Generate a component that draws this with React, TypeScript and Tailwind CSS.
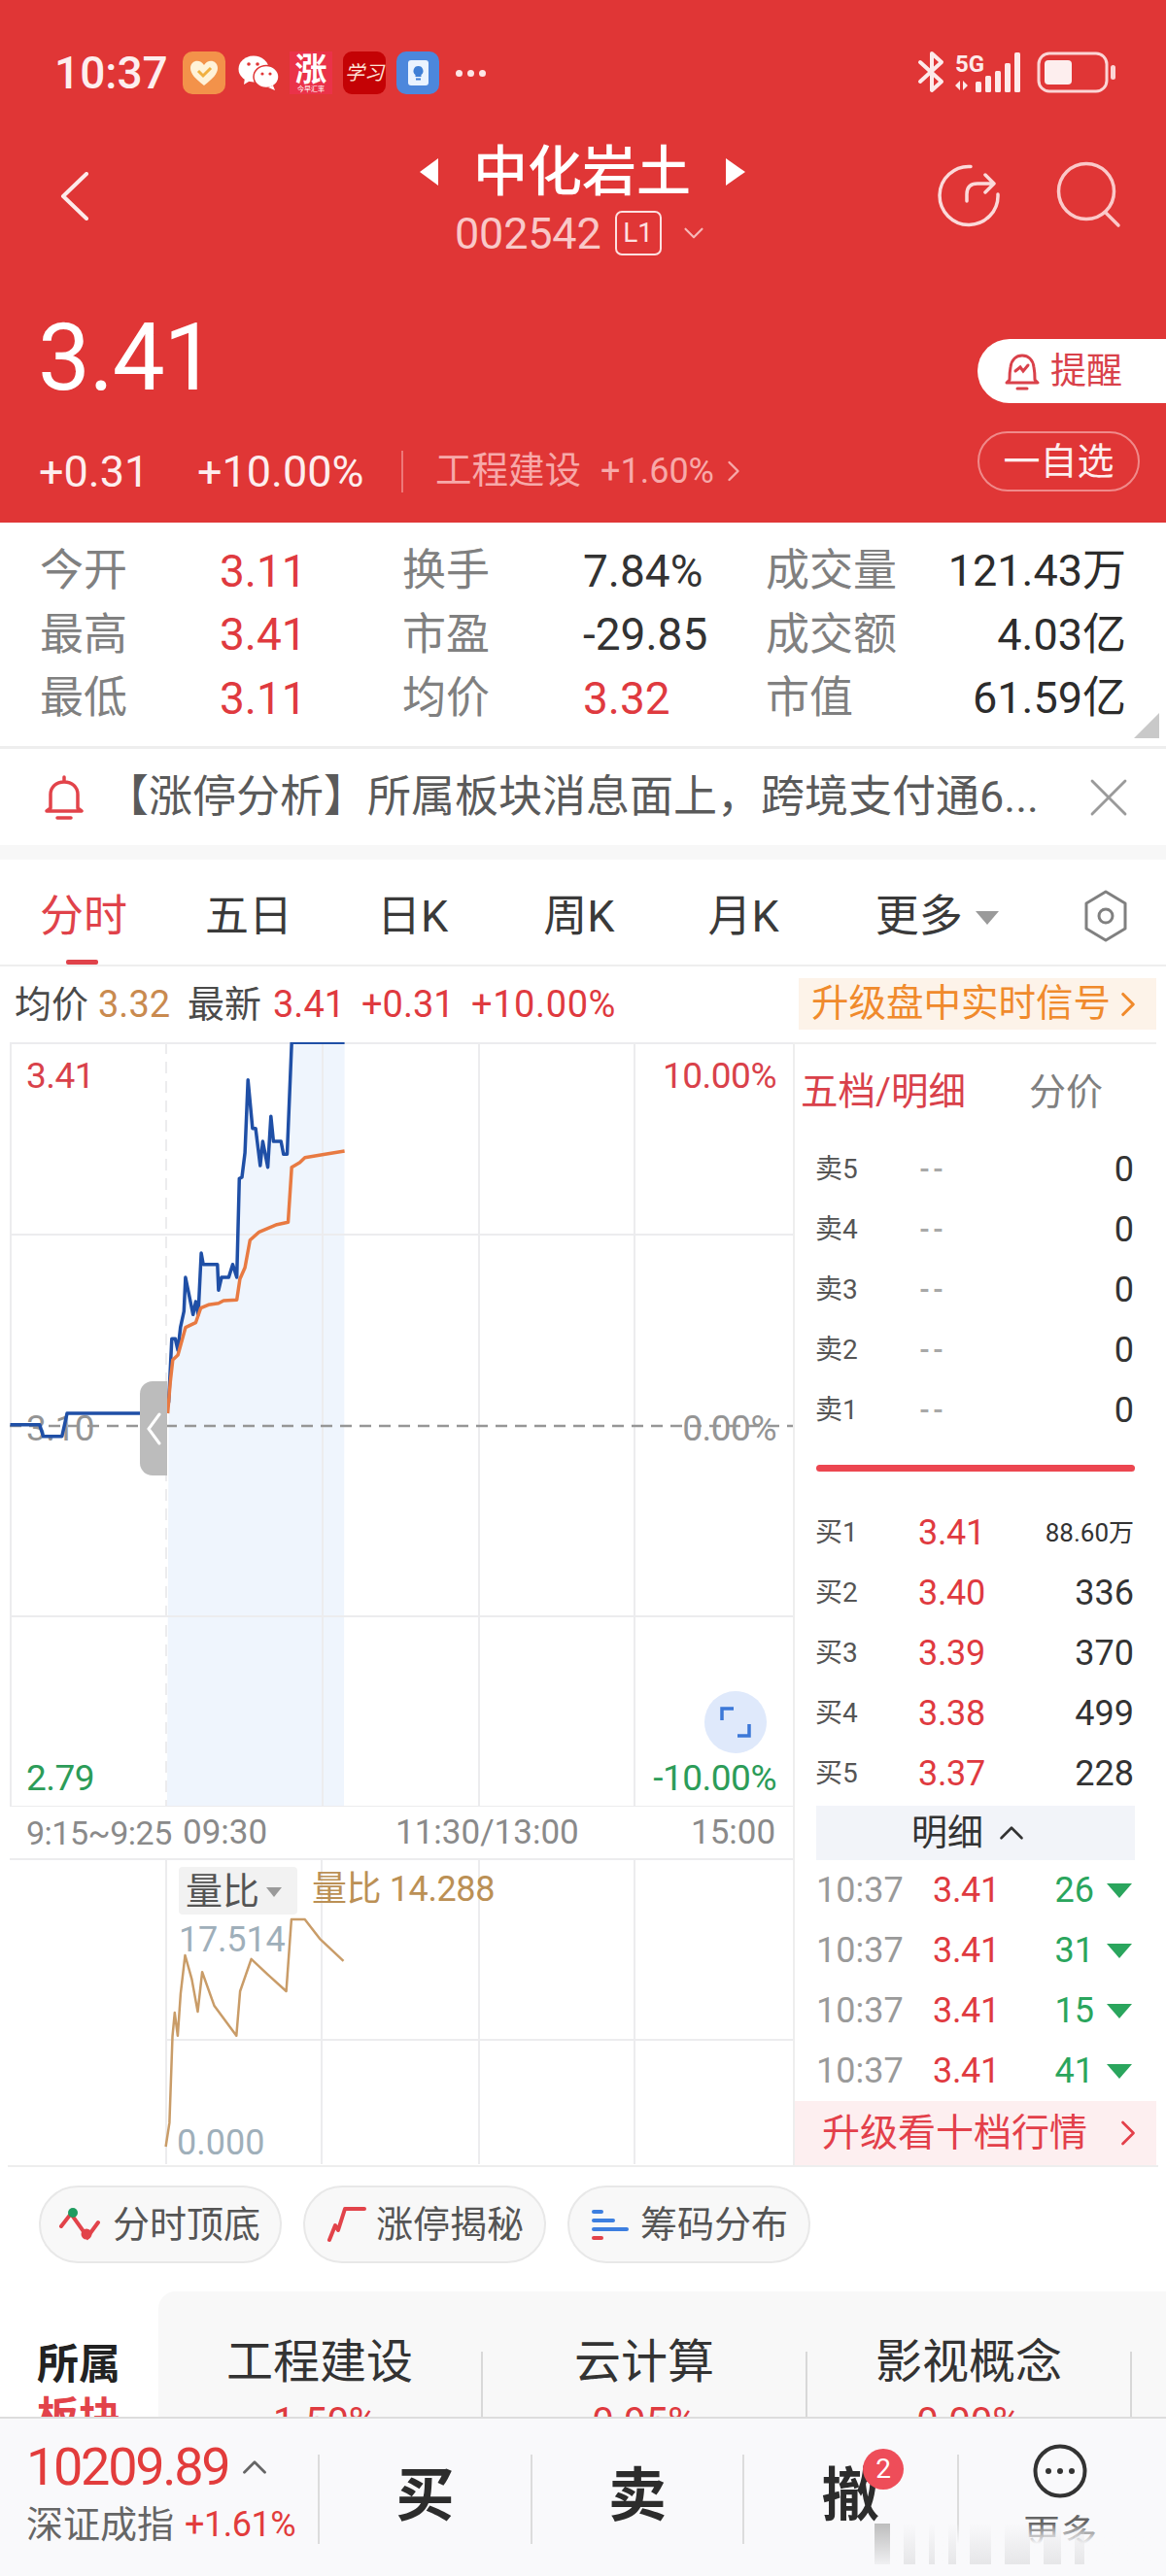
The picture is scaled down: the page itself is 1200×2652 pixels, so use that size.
import { ChevronRight, ChevronUp, ChevronDown, X } from 'lucide-react';

// zoom-crop coordinates -> page pixels for the two charts
const pts = (list: number[][], sx: number, sy: number, oy: number) =>
  list.map(([x, y]) => `${(x / sx).toFixed(1)},${(oy + y / sy).toFixed(1)}`).join(' ');

const BLUE = [[20,1220],[78,1220],[85,1256],[122,1256],[132,1185],[325,1185],[332,1150],[338,955],[345,955],[350,990],[355,920],[362,870],[365,765],[380,880],[385,840],[390,880],[396,690],[400,725],[428,725],[430,805],[436,765],[450,765],[458,725],[466,765],[471,460],[476,456],[482,380],[488,155],[497,305],[503,305],[512,420],[517,345],[527,425],[533,268],[538,345],[553,345],[558,385],[565,385],[574,40],[678,40]];
const BLUE_FILL = BLUE.slice(6);
const ORANGE = [[330,1185],[335,1090],[340,1020],[350,1005],[365,920],[385,905],[395,860],[410,850],[430,845],[440,837],[466,835],[472,770],[482,735],[492,650],[510,625],[545,602],[567,595],[574,425],[590,410],[600,395],[640,385],[678,375]];
const RATIO = [[223,670],[228,620],[232,440],[235,390],[239,438],[243,350],[249,270],[258,320],[266,388],[272,305],[288,375],[318,438],[323,345],[338,278],[360,310],[385,345],[392,195],[410,195],[430,235],[462,282]];

const STATS = [
  ['今开', '3.11', '换手', '7.84%', '成交量', '121.43万', false],
  ['最高', '3.41', '市盈', '-29.85', '成交额', '4.03亿', false],
  ['最低', '3.11', '均价', '3.32', '市值', '61.59亿', true],
] as const;

const SELLS = ['卖5', '卖4', '卖3', '卖2', '卖1'];
const BUYS = [
  ['买1', '3.41', '88.60万'],
  ['买2', '3.40', '336'],
  ['买3', '3.39', '370'],
  ['买4', '3.38', '499'],
  ['买5', '3.37', '228'],
];
const TICKS = ['26', '31', '15', '41'];

function StatusBar() {
  return (
    <div className="flex h-[152px] items-center justify-between pl-[56px] pr-[52px] pb-[2px] text-white">
      <div className="flex items-center">
        <span className="w-[132px] text-[46px] font-medium leading-none text-[#fdeeee]">10:37</span>
        <div className="flex h-[44px] w-[44px] items-center justify-center rounded-[10px] bg-[#f3924a]">
          <svg width="30" height="28" viewBox="0 0 30 28">
            <path d="M15 27C6 20 1 15 1 9c0-8 10-10 14-3 4-7 14-5 14 3 0 6-5 11-14 18z" fill="#fff2d8" />
            <path d="M9 12l5 5 8-8" fill="none" stroke="#f0b040" strokeWidth="3" />
          </svg>
        </div>
        <svg className="ml-[13px]" width="43" height="36" viewBox="0 0 43 36">
          <ellipse cx="16" cy="14" rx="15.500" ry="13.500" fill="#fff" />
          <path d="M7 23l-1 7 8-5z" fill="#fff" />
          <ellipse cx="29" cy="22" rx="13" ry="11.500" fill="#fff" stroke="#e03636" strokeWidth="1.500" />
          <path d="M36 31l2 5-7-3z" fill="#fff" />
          <circle cx="11" cy="9" r="1.800" fill="#e03636" />
          <circle cx="20" cy="9" r="1.800" fill="#e03636" />
          <circle cx="25" cy="19" r="1.600" fill="#e03636" />
          <circle cx="33" cy="19" r="1.600" fill="#e03636" />
        </svg>
        <div className="ml-[10px] flex h-[44px] w-[44px] flex-col items-center justify-center bg-[#ea3249] leading-none text-white">
          <span className="text-[33px] font-bold leading-[33px]">涨</span>
          <span className="text-[7px] leading-[8px]">今早汇率</span>
        </div>
        <div className="ml-[11px] flex h-[44px] w-[44px] items-center justify-center rounded-[9px] bg-[#c40205] font-['Liberation_Serif','Noto_Sans_CJK_SC',serif] text-[20px] italic leading-none text-[#fde2d6]">
          学习
        </div>
        <div className="ml-[11px] flex h-[44px] w-[44px] items-center justify-center rounded-[10px] bg-[#4c87dc]">
          <div className="flex h-[26px] w-[21px] items-center justify-center rounded-[3px] bg-[#eaf3ff]">
            <svg width="13" height="16" viewBox="0 0 13 16">
              <path d="M6.500 1a5 5 0 0 0-3 9v2h6v-2a5 5 0 0 0-3-9z" fill="#3f7fd6" />
              <rect x="4" y="13.500" width="5" height="2" fill="#3f7fd6" />
            </svg>
          </div>
        </div>
        <div className="ml-[17px] flex gap-[5px]">
          <span className="h-[7px] w-[7px] rounded-full bg-[#fde6e6]" />
          <span className="h-[7px] w-[7px] rounded-full bg-[#fde6e6]" />
          <span className="h-[7px] w-[7px] rounded-full bg-[#fde6e6]" />
        </div>
      </div>
      <svg width="204" height="44" viewBox="944 55 204 44" className="text-[#fdeaea]">
        <path d="M947 66l22 20-10 9V57l10 9-22 20" fill="none" stroke="currentColor" strokeWidth="4" strokeLinejoin="round" strokeLinecap="round" />
        <text x="983" y="76" fill="currentColor" fontSize="24" fontWeight="700" fontFamily="Roboto, sans-serif">5G</text>
        <path d="M988 85l-5 5 5 5zM991 85l5 5-5 5z" fill="currentColor" />
        <rect x="1004" y="86" width="6" height="11" rx="1.500" fill="currentColor" />
        <rect x="1014" y="80" width="6" height="17" rx="1.500" fill="currentColor" />
        <rect x="1024" y="75" width="6" height="22" rx="1.500" fill="currentColor" />
        <rect x="1034" y="67" width="6" height="30" rx="1.500" fill="currentColor" />
        <rect x="1044" y="56" width="6" height="41" rx="1.500" fill="currentColor" />
        <rect x="1069" y="57" width="70" height="39" rx="11" fill="none" stroke="#fbd5d5" strokeWidth="3" />
        <rect x="1075" y="64" width="28" height="25" rx="4" fill="#fdeeee" />
        <rect x="1143" y="69" width="5" height="15" rx="2.500" fill="#fbd5d5" />
      </svg>
    </div>
  );
}

function NavRow() {
  return (
    <div className="flex h-[122px]">
      <div className="w-[432px] pl-[62px] pt-[25px]">
        <svg width="30" height="50" viewBox="0 0 30 50" fill="none" stroke="#fdeaea" strokeWidth="4" strokeLinecap="round" strokeLinejoin="round">
          <path d="M27 2L3 25l24 23" />
        </svg>
      </div>
      <div className="w-[335px]">
        <div className="flex h-[50px] items-center justify-between">
          <span className="h-0 w-0 border-y-[14px] border-r-[19px] border-y-transparent border-r-white" />
          <span className="text-[56px] font-medium leading-none text-white">中化岩土</span>
          <span className="h-0 w-0 border-y-[14px] border-l-[20px] border-y-transparent border-l-white" />
        </div>
        <div className="mt-[15px] flex h-[46px] items-center pl-[36px]">
          <span className="text-[45px] leading-none tracking-[-0.2px] text-[#f9c8c8]">002542</span>
          <span className="ml-[14px] flex h-[46px] w-[48px] items-center justify-center rounded-[7px] border-2 border-[#fde0e0] text-[28px] leading-none text-[#fde0e0]">L1</span>
          <ChevronDown size={34} strokeWidth={1.5} className="ml-[16px] text-[#f7b8b8]" />
        </div>
      </div>
      <div className="flex flex-1 items-start pl-[195px] pt-[14px]">
        <svg width="70" height="70" viewBox="0 0 70 70" fill="none" stroke="#fbdada" strokeWidth="3.500" strokeLinecap="round" strokeLinejoin="round">
          <path d="M37 5.500A30 30 0 1 0 65 34" />
          <path d="M33 41v-7q0-11 11-11h16M52 14l9 9-9 9" />
        </svg>
        <svg className="ml-[54px] -mt-[1px]" width="72" height="72" viewBox="0 0 72 72" fill="none" stroke="#fbc9c9" strokeWidth="3.500" strokeLinecap="round">
          <circle cx="32" cy="32" r="28.500" />
          <path d="M52 54l13 13" />
        </svg>
      </div>
    </div>
  );
}

function PriceRow() {
  return (
    <div className="flex justify-between">
      <div>
        <div className="pl-[39px] pt-[44px] text-[96px] font-normal leading-[100px] tracking-[-1.200px] text-white">3.41</div>
        <div className="mt-[45px] flex h-[44px] items-center pl-[40px]">
          <span className="w-[163px] text-[45px] leading-none text-[#fdeeee]">+0.31</span>
          <span className="w-[210px] text-[45px] leading-none text-[#fdeeee]">+10.00%</span>
          <span className="h-[43px] w-[2px] bg-[#ee7878]" />
          <span className="ml-[33px] text-[37.500px] leading-none text-[#f7a9a9]">工程建设</span>
          <span className="ml-[20px] text-[36px] leading-none text-[#f7a9a9]">+1.60%</span>
          <ChevronRight size={36} strokeWidth={1.6} className="ml-[2px] text-[#f7a9a9]" />
        </div>
      </div>
      <div className="flex w-[194px] flex-col items-start pt-[75px]">
        <div className="flex h-[66px] w-[194px] items-center rounded-l-full bg-white pl-[28px]">
          <svg width="36" height="42" viewBox="0 0 36 42" fill="none" stroke="#d9414a" strokeWidth="3">
            <path d="M5 30c0-4 0-8 1-13C7 9 12 5 18 5s11 4 12 12c1 5 1 9 1 13l3 3H2z" strokeLinejoin="round" />
            <path d="M11 21l5-4 3 4 5-6M13 39h10" strokeLinecap="round" />
          </svg>
          <span className="ml-[11px] text-[37px] leading-none text-[#d9414a]">提醒</span>
        </div>
        <div className="mt-[29px] flex h-[62px] w-[167px] items-center justify-center rounded-full border-2 border-[#f08a8a] text-[38px] leading-none text-[#fdeeee]">
          一自选
        </div>
      </div>
    </div>
  );
}

function Stats() {
  return (
    <div className="relative h-[230px] bg-white pl-[41px] pr-[41px] pt-[17px]">
      {STATS.map((row) => (
        <div key={row[0]} className="grid h-[65.500px] grid-cols-[185px_188px_186px_188px_1fr] items-center text-[45px] leading-none">
          <span className="text-[#808080]">{row[0]}</span>
          <span className="text-[46px] text-[#df3a3f]">{row[1]}</span>
          <span className="text-[#808080]">{row[2]}</span>
          <span className={row[6] ? 'text-[46px] text-[#df3a3f]' : 'text-[46px] text-[#333]'}>{row[3]}</span>
          <div className="flex justify-between">
            <span className="text-[#808080]">{row[4]}</span>
            <span className="text-[#2c2c2c]">{row[5]}</span>
          </div>
        </div>
      ))}
      <span className="absolute bottom-[8px] right-[7px] h-0 w-0 border-b-[26px] border-l-[26px] border-b-[#c9c9c9] border-l-transparent" />
    </div>
  );
}

function Notice() {
  return (
    <div className="flex h-[102px] items-center border-t-[3px] border-[#eeeeee] bg-white pl-[46px]">
      <svg width="40" height="48" viewBox="0 0 40 48" fill="none" stroke="#e2434a" strokeWidth="3.500">
        <path d="M6 35V21C6 13 12 8 20 8s14 5 14 13v14l4 3H2zM20 8V3M13 45h14" strokeLinejoin="round" strokeLinecap="round" />
      </svg>
      <span className="ml-[22px] w-[958px] whitespace-nowrap text-[45px] leading-none text-[#5a5a5a]">【涨停分析】所属板块消息面上，跨境支付通6...</span>
      <X size={68} strokeWidth={1} className="ml-[41px] shrink-0 text-[#9a9a9a]" />
    </div>
  );
}

function Tabs() {
  return (
    <div className="relative flex h-[110px] items-center border-b-2 border-[#eeeeee] bg-white pt-[8px] text-[45px] leading-none text-[#3a3a3a]">
      <span className="ml-[41px] text-[#e0424a]">分时</span>
      <span className="ml-[80px]">五日</span>
      <span className="ml-[87px]">日K</span>
      <span className="ml-[98px]">周K</span>
      <span className="ml-[96px]">月K</span>
      <span className="ml-[99px]">更多</span>
      <span className="ml-[13px] mt-[3px] h-0 w-0 border-x-[12px] border-t-[14px] border-x-transparent border-t-[#9a9a9a]" />
      <svg className="ml-[86px]" width="48" height="54" viewBox="0 0 48 54" fill="none" stroke="#808080" strokeWidth="3">
        <path d="M24 2l20 12v26L24 52 4 40V14z" strokeLinejoin="round" />
        <circle cx="24" cy="27" r="7" />
      </svg>
      <span className="absolute bottom-[0px] left-[68px] h-[5px] w-[33px] rounded-[2px] bg-[#e0424a]" />
    </div>
  );
}

function InfoLine() {
  return (
    <div className="flex h-[65px] items-end justify-between bg-white pl-[15px] pr-[10px]">
      <div className="flex h-[53px] items-center text-[38px] leading-none">
        <span className="w-[86px] text-[#4a4a4a]">均价</span>
        <span className="w-[92px] text-[#c98a4f]">3.32</span>
        <span className="w-[88px] text-[#4a4a4a]">最新</span>
        <span className="w-[91px] text-[#df3a3f]">3.41</span>
        <span className="w-[113px] text-[#df3a3f]">+0.31</span>
        <span className="tracking-[0.6px] text-[#df3a3f]">+10.00%</span>
      </div>
      <div className="flex h-[53px] w-[368px] items-center bg-[#fdf3e9] pl-[13px] text-[38.500px] leading-none text-[#f08a2c]">
        升级盘中实时信号
        <ChevronRight size={42} strokeWidth={1.8} className="ml-[-3px]" />
      </div>
    </div>
  );
}

function PriceChart() {
  return (
    <div className="relative h-[787px]">
      <span className="absolute left-[17px] top-[16px] text-[37px] leading-[37px] tracking-[-0.5px] text-[#d9414a]">3.41</span>
      <span className="absolute right-[17px] top-[16px] text-[37px] leading-[37px] tracking-[-0.5px] text-[#d9414a]">10.00%</span>
      <span className="absolute left-[17px] top-[379px] text-[37px] leading-[37px] tracking-[-0.5px] text-[#949494]">3.10</span>
      <span className="absolute right-[17px] top-[379px] text-[37px] leading-[37px] tracking-[-0.5px] text-[#949494]">0.00%</span>
      <span className="absolute bottom-[11px] left-[17px] text-[37px] leading-[37px] tracking-[-0.5px] text-[#2c9c58]">2.79</span>
      <span className="absolute bottom-[11px] right-[17px] text-[37px] leading-[37px] tracking-[-0.5px] text-[#2c9c58]">-10.00%</span>
      <svg className="relative z-10 block" width="806" height="787" viewBox="10 1073 806 787">
        <polygon points={`${pts(BLUE_FILL, 1.912, 3, 1060)} 354,1860 172,1860`} fill="#eff5fd" />
        <g stroke="#ececee" strokeWidth="2" fill="none">
          <path d="M10 1074H816M10 1271H816M10 1664H816M10 1860H816M11 1073V1860M332 1073V1860M493 1073V1860M653 1073V1860" />
          <path d="M171 1073V1860" strokeDasharray="12 8" />
        </g>
        <path d="M10 1468H816" stroke="#969696" strokeWidth="2.500" strokeDasharray="12 8" />
        <polyline points={pts(BLUE, 1.912, 3, 1060)} fill="none" stroke="#1f4fa6" strokeWidth="3.500" strokeLinejoin="round" />
        <polyline points={pts(ORANGE, 1.912, 3, 1060)} fill="none" stroke="#e87a42" strokeWidth="3.500" strokeLinejoin="round" />
      </svg>
      <div className="absolute left-[134px] top-[349px] z-20 flex h-[97px] w-[28px] items-center justify-center rounded-l-[13px] bg-[#bcbcbc]">
        <svg width="16" height="34" viewBox="0 0 16 34" fill="none" stroke="#fff" strokeWidth="3" strokeLinecap="round">
          <path d="M14 2L3 17l11 15" />
        </svg>
      </div>
      <div className="absolute left-[715px] top-[668px] z-20 flex h-[64px] w-[64px] items-center justify-center rounded-full bg-[#dfe9fb]">
        <svg width="32" height="32" viewBox="0 0 32 32" fill="none" stroke="#3c78d8" strokeWidth="3.500">
          <path d="M2 14V2h12M30 18v12H18" />
        </svg>
      </div>
    </div>
  );
}

function VolumeChart() {
  return (
    <div className="relative h-[315px]">
      <span className="absolute left-[174px] top-[9px] flex h-[49px] w-[122px] items-center rounded-[4px] bg-[#f2f2f2] pl-[7px] text-[38px] leading-none text-[#555]">
        量比
        <span className="ml-[7px] mt-[3px] h-0 w-0 border-x-[8px] border-t-[10px] border-x-transparent border-t-[#9a9a9a]" />
      </span>
      <span className="absolute left-[311px] top-[14px] text-[36px] leading-[36px] tracking-[-0.4px] text-[#bb9055]">量比 14.288</span>
      <span className="absolute left-[174px] top-[66px] text-[36px] leading-[36px] tracking-[-0.2px] text-[#9fafba]">17.514</span>
      <span className="absolute left-[172px] bottom-[4px] text-[36px] leading-[36px] text-[#9fafba]">0.000</span>
      <svg className="block" width="806" height="315" viewBox="10 1913 806 315">
        <path d="M10 1914H816M171 1913V2228M331 1913V2228M493 1913V2228M653 1913V2228M171 2100H816" stroke="#ececee" strokeWidth="2" fill="none" />
        <polyline points={pts(RATIO, 1.307, 2.03, 1880)} fill="none" stroke="#c99c68" strokeWidth="2.500" strokeLinejoin="round" />
      </svg>
    </div>
  );
}

function QuotePanel() {
  return (
    <div className="w-[374px] border-l-2 border-t-2 border-[#eeeeee]">
      <div className="flex h-[98px] items-center pl-[6px]">
        <span className="text-[38.500px] leading-none text-[#d9414a]">五档/明细</span>
        <span className="ml-[65px] text-[38px] leading-none text-[#808080]">分价</span>
      </div>
      {SELLS.map((label) => (
        <div key={label} className="flex h-[62px] items-center pl-[21px] pr-[23px]">
          <span className="w-[107px] text-[28px] leading-none text-[#555]">{label}</span>
          <span className="flex-1 text-[28px] font-bold leading-none tracking-[3px] text-[#a8a8a8]">--</span>
          <span className="text-[36px] leading-none text-[#333]">0</span>
        </div>
      ))}
      <div className="mx-[22px] mt-[25px] h-[7px] rounded-full bg-[#ec4650]" />
      <div className="h-[32px]" />
      {BUYS.map(([label, price, vol]) => (
        <div key={label} className="flex h-[62px] items-center pl-[21px] pr-[23px]">
          <span className="w-[106px] text-[28px] leading-none text-[#555]">{label}</span>
          <span className="flex-1 text-[36px] leading-none tracking-[-0.3px] text-[#df3a3f]">{price}</span>
          <span className={vol.length > 3 ? 'text-[26px] leading-none text-[#333]' : 'text-[36px] leading-none text-[#333]'}>{vol}</span>
        </div>
      ))}
      <div className="mx-[22px] mt-[2px] flex h-[56px] items-center justify-center bg-[#f2f4f9] pr-[8px] text-[37px] leading-none text-[#333]">
        明细
        <ChevronUp size={42} strokeWidth={1.5} className="ml-[8px]" />
      </div>
      {TICKS.map((vol) => (
        <div key={vol} className="flex h-[62px] items-center pl-[22px] pr-[24px] text-[36px] leading-none">
          <span className="w-[120px] text-[#9a9a9a]">10:37</span>
          <span className="w-[100px] tracking-[-0.3px] text-[#df3a3f]">3.41</span>
          <span className="w-[66px] text-right text-[#2aa55d]">{vol}</span>
          <span className="ml-[13px] h-0 w-0 border-x-[13px] border-t-[15px] border-x-transparent border-t-[#2aa55d]" />
        </div>
      ))}
      <div className="flex h-[66px] items-center bg-[#fdeff0] pl-[28px] text-[39px] leading-none text-[#e3404a]">
        升级看十档行情
        <ChevronRight size={44} strokeWidth={1.5} className="ml-[20px]" />
      </div>
    </div>
  );
}

function Pills() {
  return (
    <div className="mt-[19px] flex gap-[22px] pl-[40px] text-[38px] leading-none text-[#555]">
      <div className="flex h-[80px] w-[250px] items-center rounded-full border-2 border-[#e8e8e8] bg-[#f8f8f8] pl-[19px]">
        <svg width="44" height="40" viewBox="60 2270 44 40" fill="none" strokeWidth="4" strokeLinecap="round">
          <path d="M62 2292l10-13 17 24 11-15" stroke="#e2434a" />
          <circle cx="74" cy="2278" r="5" fill="#1f9c60" />
          <circle cx="88" cy="2300" r="5.500" fill="#e2434a" />
        </svg>
        <span className="ml-[11px]">分时顶底</span>
      </div>
      <div className="flex h-[80px] w-[250px] items-center rounded-full border-2 border-[#e8e8e8] bg-[#f8f8f8] pl-[23px]">
        <svg width="40" height="38" viewBox="335 2270 40 38" fill="none" stroke="#e2434a" strokeWidth="4" strokeLinecap="round" strokeLinejoin="round">
          <path d="M337 2305l6-15 3 5 7-22h20" />
        </svg>
        <span className="ml-[10px]">涨停揭秘</span>
      </div>
      <div className="flex h-[80px] w-[250px] items-center rounded-full border-2 border-[#e8e8e8] bg-[#f8f8f8] pl-[23px]">
        <div className="flex w-[38px] flex-col gap-[5px]">
          <span className="h-[4px] w-[12px] rounded-full bg-[#3d7fe0]" />
          <span className="h-[4px] w-[24px] rounded-full bg-[#3d7fe0]" />
          <span className="h-[4px] w-[38px] rounded-full bg-[#3d7fe0]" />
          <span className="h-[4px] w-[12px] rounded-full bg-[#e2434a]" />
        </div>
        <span className="ml-[12px]">筹码分布</span>
      </div>
    </div>
  );
}

function Sectors() {
  return (
    <div className="mt-[29px] flex h-[300px]">
      <div className="w-[163px] pl-[38px] pt-[48px] text-[43px] font-bold leading-[55px]">
        <div className="text-[#222]">所属</div>
        <div className="text-[#e2434a]">板块</div>
      </div>
      <div className="flex flex-1 rounded-tl-[18px] bg-[#f8f8f8]">
        {[
          ['工程建设', '-1.50%'],
          ['云计算', '0.95%'],
          ['影视概念', '0.00%'],
        ].map(([name, pct]) => (
          <div key={name} className="flex">
            <div className="w-[332px] pt-[45px] text-center">
              <div className="text-[48px] leading-[56px] text-[#333]">{name}</div>
              <div className="mt-[9px] text-[40px] leading-[50px] text-[#df3a3f]">{pct}</div>
            </div>
            <span className="mt-[62px] h-[150px] w-[2px] bg-[#d8d8d8]" />
          </div>
        ))}
      </div>
    </div>
  );
}

function BottomBar() {
  const divider = <span className="mt-[37px] h-[92px] w-[2px] bg-[#dcdcdc]" />;
  return (
    <div className="absolute bottom-0 left-0 right-0 z-30 flex h-[164px] border-t-2 border-[#dddddd] bg-[#f9f9fb]">
      <div className="w-[327px] pl-[27px] pt-[20px]">
        <div className="flex h-[60px] items-center">
          <span className="text-[54px] leading-none tracking-[-2.300px] text-[#e23c3c]">10209.89</span>
          <ChevronUp size={42} strokeWidth={1.6} className="ml-[6px] text-[#666]" />
        </div>
        <div className="mt-[4px] flex h-[50px] items-center text-[38px] leading-none">
          <span className="text-[#666]">深证成指</span>
          <span className="ml-[11px] text-[36px] tracking-[-0.5px] text-[#e23c3c]">+1.61%</span>
        </div>
      </div>
      {divider}
      <div className="w-[217px] pt-[45px] text-center text-[60px] font-bold leading-[70px] text-[#2c2c2c]">买</div>
      {divider}
      <div className="w-[216px] pt-[45px] text-center text-[60px] font-bold leading-[70px] text-[#2c2c2c]">卖</div>
      {divider}
      <div className="relative w-[219px] pt-[45px] text-center text-[60px] font-bold leading-[70px] text-[#2c2c2c]">
        撤
        <span className="absolute left-[122px] top-[31px] flex h-[42px] w-[42px] items-center justify-center rounded-full bg-[#ee4d59] text-[28px] font-normal leading-none text-white">2</span>
      </div>
      {divider}
      <div className="flex flex-1 flex-col items-center pr-[5px] pt-[26px]">
        <svg width="56" height="56" viewBox="0 0 56 56">
          <circle cx="28" cy="28" r="25.500" fill="none" stroke="#333" strokeWidth="4" />
          <circle cx="16" cy="28" r="3" fill="#333" />
          <circle cx="28" cy="28" r="3" fill="#333" />
          <circle cx="40" cy="28" r="3" fill="#333" />
        </svg>
        <span className="mt-[14px] text-[38px] leading-[44px] text-[#666]">更多</span>
      </div>
      {/* 水印 */}
      <div className="absolute bottom-[12px] left-[900px] flex h-[42px] w-[290px] gap-[14px] bg-linear-to-b from-transparent via-[#f9f9fb] to-[#f9f9fb]">
        <span className="h-full w-[16px] bg-linear-to-b from-[#bdbdbd] to-[#f0f0f2]" />
        <span className="h-full w-[12px] bg-linear-to-b from-transparent to-[#e6e6e8]" />
        <span className="h-full w-[6px] bg-linear-to-b from-transparent to-[#e6e6e8]" />
        <span className="h-full w-[8px] bg-linear-to-b from-transparent to-[#e6e6e8]" />
        <span className="h-full w-[22px] bg-linear-to-b from-transparent to-[#e6e6e8]" />
        <span className="h-full w-[26px] bg-linear-to-b from-transparent to-[#e6e6e8]" />
        <span className="h-full w-[18px] bg-linear-to-b from-transparent to-[#e6e6e8]" />
        <span className="h-full w-[10px] bg-linear-to-b from-transparent to-[#e6e6e8]" />
      </div>
    </div>
  );
}

export default function App() {
  return (
    <div className="relative h-[2652px] w-[1200px] overflow-hidden bg-white font-['Roboto','Noto_Sans_CJK_SC',sans-serif]">
      <div className="h-[538px] bg-[#e03636]">
        <StatusBar />
        <NavRow />
        <PriceRow />
      </div>
      <Stats />
      <Notice />
      <div className="h-[15px] bg-[#f7f7f7]" />
      <Tabs />
      <InfoLine />
      <div className="mt-[13px] flex pl-[10px]">
        <div className="w-[806px]">
          <PriceChart />
          <div className="flex h-[53px] items-center text-[35px] leading-none text-[#8a8a8a]">
            <span className="ml-[17px] w-[161px] text-[34px] tracking-[-0.5px]">9:15~9:25</span>
            <span className="w-[219px]">09:30</span>
            <span className="w-[304px]">11:30/13:00</span>
            <span>15:00</span>
          </div>
          <VolumeChart />
        </div>
        <QuotePanel />
      </div>
      <div className="mx-[8px] h-[2px] bg-[#eeeeee]" />
      <Pills />
      <Sectors />
      <BottomBar />
    </div>
  );
}
